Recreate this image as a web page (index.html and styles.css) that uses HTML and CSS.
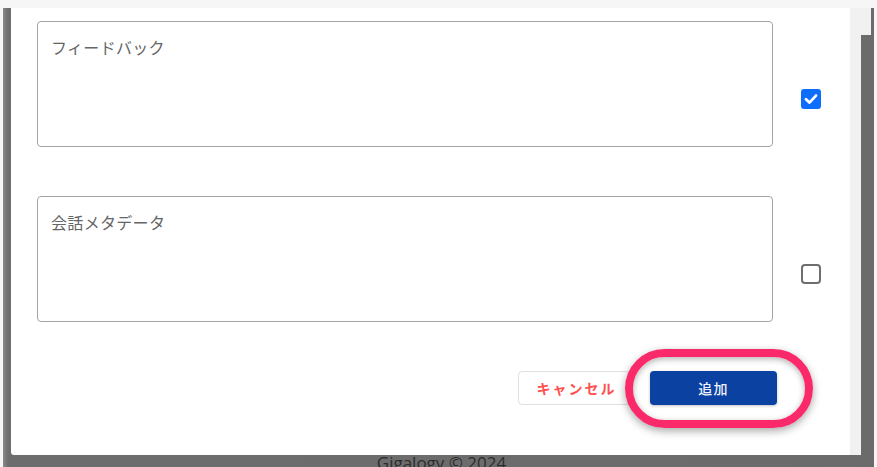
FILE: index.html
```html
<!DOCTYPE html>
<html lang="ja">
<head>
<meta charset="utf-8">
<title>Dialog</title>
<link rel="stylesheet" href="styles.css">
</head>
<body>
<div class="screen">
  <div class="frame">
    <div class="main">
      <div class="modal">
        <div class="field-row">
          <div class="field">
            <div class="box"><span class="label">フィードバック</span></div>
            <div class="details"></div>
          </div>
          <span class="check checked">
            <svg viewBox="0 0 20 20" width="20" height="20"><path d="M5 10.3 L8.4 13.6 L15 6.6" fill="none" stroke="#fff" stroke-width="2.8" stroke-linecap="round" stroke-linejoin="round"/></svg>
          </span>
        </div>
        <div class="field-row">
          <div class="field">
            <div class="box"><span class="label">会話メタデータ</span></div>
            <div class="details"></div>
          </div>
          <span class="check"></span>
        </div>
        <div class="actions">
          <button class="btn btn-cancel">キャンセル</button>
          <div class="add-wrap">
            <button class="btn btn-add">追加</button>
            <div class="ring"></div>
          </div>
        </div>
      </div>
      <div class="track"></div>
      <div class="rail"><div class="rail-top"></div></div>
    </div>
    <div class="footer">Gigalogy © 2024</div>
  </div>
</div>
</body>
</html>
```

FILE: styles.css
```css
html, body {
  margin: 0;
  padding: 0;
}
body {
  background: #f6f6f6;
  width: 877px;
  height: 467px;
  overflow: hidden;
  font-family: "Noto Sans CJK JP", "Noto Sans", sans-serif;
}
.screen {
  padding: 8px 3px 0 3px;
}
.frame {
  background: linear-gradient(to right, #8a8a8a 0px, #6d6d6d 5px, #6b6b6b 100%);
  padding-left: 8px;
  height: 459px;
}
.main {
  display: flex;
  height: 447px;
}
.modal {
  width: 839px;
  height: 447px;
  background: #fff;
  box-sizing: border-box;
  padding: 13px 0 0 26px;
  border-bottom-left-radius: 3px;
}
.track {
  width: 11px;
  background: #f1f1f1;
}
.rail {
  width: 13px;
  background: #6b6b6b;
}
.rail-top {
  width: 10px;
  height: 27px;
  background: #f1f1f1;
}
.field-row {
  display: flex;
  align-items: center;
  gap: 28px;
  margin-bottom: 19px;
}
.field {
  width: 736px;
}
.box {
  height: 126px;
  box-sizing: border-box;
  border: 1px solid #a4a4a4;
  border-radius: 4px;
  padding: 15px 13px;
}
.label {
  display: block;
  font-size: 16px;
  line-height: 20px;
  color: #666;
  letter-spacing: 0.02em;
}
.details {
  height: 30px;
}
.check {
  width: 20px;
  height: 20px;
  box-sizing: border-box;
  border: 2px solid #6e6e6e;
  border-radius: 4px;
  display: block;
}
.check.checked {
  border: none;
  background: #0d6efd;
  border-radius: 3px;
}
.check svg {
  display: block;
}
.actions {
  display: flex;
  justify-content: flex-end;
  gap: 20px;
  padding-right: 73px;
  margin-top: 1px;
}
.btn {
  height: 34px;
  border-radius: 4px;
  font-family: "Noto Sans CJK JP", "Noto Sans", sans-serif;
  font-size: 14px;
  letter-spacing: 0.09em;
  cursor: pointer;
}
.btn-cancel {
  width: 112px;
  background: #fff;
  border: 1px solid #e0e0e0;
  color: #ff4f4f;
  font-weight: 700;
  letter-spacing: 0.14em;
  padding: 0 0 0 5px;
}
.add-wrap {
  position: relative;
}
.btn-add {
  width: 127px;
  background: #0b41a1;
  border: none;
  color: #eef2fb;
  font-weight: 500;
  box-shadow: 0 1px 3px rgba(0,0,0,0.25);
  display: block;
}
.ring {
  position: absolute;
  left: -25px;
  top: -22px;
  width: 188px;
  height: 79px;
  box-sizing: border-box;
  border: 8px solid #fa2a6a;
  border-radius: 40px;
  box-shadow: 0 3px 8px rgba(0,0,0,0.35), inset 0 2px 6px rgba(0,0,0,0.3);
  pointer-events: none;
}
.footer {
  height: 12px;
  overflow: hidden;
  text-align: center;
  padding-right: 2px;
  font-family: "Open Sans", sans-serif;
  font-size: 17px;
  line-height: 12px;
  padding-top: 2px;
  color: #2c2c2c;
}
```
